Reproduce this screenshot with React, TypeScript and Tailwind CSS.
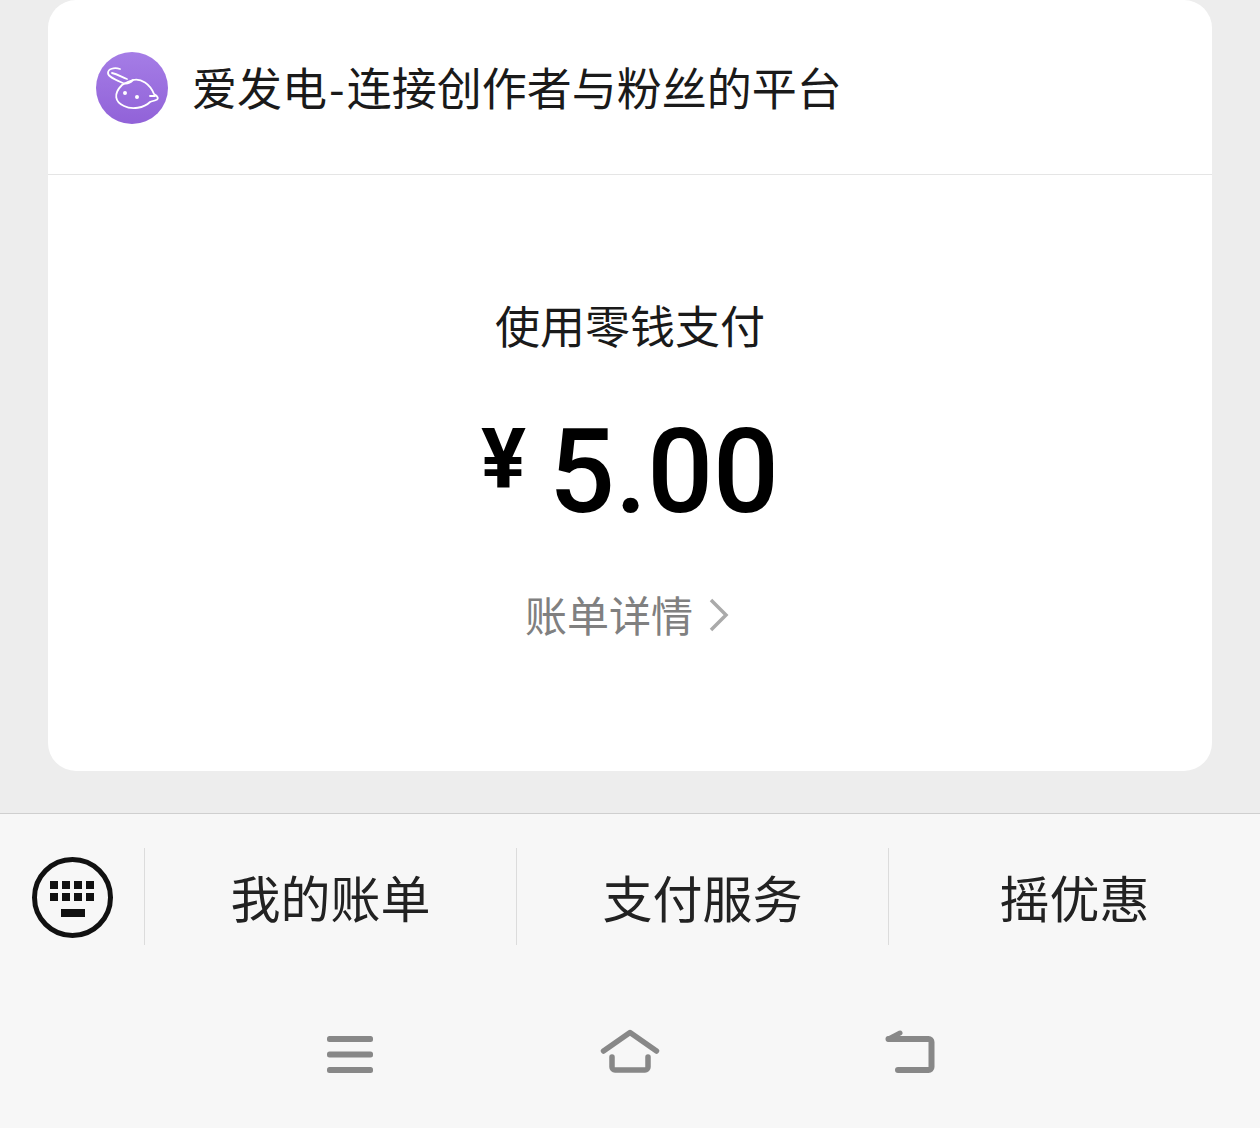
const cjk = "font-['Noto_Sans_CJK_SC','Noto_Sans',sans-serif]";

function Logo() {
  return (
    <div className="flex h-[72px] w-[72px] items-center justify-center rounded-full bg-gradient-to-b from-[#a57de6] to-[#9162d8]">
      <svg width="72" height="72" viewBox="0 0 72 72" fill="none" stroke="#fff" strokeWidth="1.8" strokeLinecap="round" strokeLinejoin="round">
        <path d="M24 17C18 15 12 17 12 21c0 4 8 7 15 10 3 1 6 1 10-3" />
        <path d="M16 21c6 1 11 5 15 6" />
        <path d="M37 28c8-2 17 4 21 14 4 2 5 5 2 6-2 1-4 1-6 2-6 6-18 8-26 4-9-4-11-12-2-21 3-2 7-4 11-5z" />
        <path d="M54 44c2 0 4 0 5 0" />
        <circle cx="29" cy="41" r="1.100" fill="#fff" />
        <circle cx="41" cy="45" r="1.100" fill="#fff" />
      </svg>
    </div>
  );
}

function KeyboardIcon() {
  return (
    <svg width="81" height="81" viewBox="0 0 81 81" fill="#111">
      <circle cx="40.5" cy="40.500" r="38" fill="none" stroke="#111" strokeWidth="5" />
      {[18, 30, 42, 54].map((x) => (
        <g key={x}>
          <rect x={x} y="24" width="8" height="8" />
          <rect x={x} y="36" width="8" height="8" />
        </g>
      ))}
      <rect x="29" y="52" width="24" height="8" />
    </svg>
  );
}

function MenuIcon() {
  return (
    <svg width="46" height="37" viewBox="0 0 46 37" fill="#888">
      <rect x="0" y="0" width="46" height="6" rx="2.5" />
      <rect x="0" y="15.500" width="46" height="6" rx="2.5" />
      <rect x="0" y="31" width="46" height="6" rx="2.5" />
    </svg>
  );
}

function HomeIcon() {
  return (
    <svg width="60" height="44" viewBox="0 0 60 44" fill="none" stroke="#888" strokeWidth="5.500" strokeLinecap="round" strokeLinejoin="round">
      <path d="M3.500 22 30 3.500 56.500 22" />
      <path d="M12 28v10a3 3 0 0 0 3 3h30a3 3 0 0 0 3-3V28" />
    </svg>
  );
}

function BackIcon() {
  return (
    <svg width="50" height="44" viewBox="0 0 50 44" fill="none" stroke="#888" strokeWidth="6" strokeLinecap="round" strokeLinejoin="round">
      <path d="M3.500 10h40a3 3 0 0 1 3 3v25a3 3 0 0 1-3 3H13" />
      <path d="M3.500 10 15 4" strokeWidth="5" />
    </svg>
  );
}

function DetailChevron() {
  return (
    <svg width="20" height="34" viewBox="0 0 20 34" fill="none" stroke="#aaa" strokeWidth="3.500" className="mt-[2px]">
      <path d="M2 2l15 15L2 32" />
    </svg>
  );
}

function MenuItem({ label }: { label: string }) {
  return (
    <div className="flex h-[97px] w-[372px] items-center justify-center border-l border-[#dcdcdc] text-[50px] text-[#222]">
      {label}
    </div>
  );
}

export default function App() {
  return (
    <div className={`flex h-[1128px] w-[1260px] flex-col overflow-hidden bg-[#ededed] ${cjk}`}>
      <div className="px-12">
        <div className="h-[771px] rounded-[28px] bg-white">
          <div className="flex h-[175px] items-center gap-6 border-b border-[#e5e5e5] px-12 pt-[2px]">
            <Logo />
            <span className="mb-1 text-[45px] leading-none text-[#1a1a1a]">
              爱发电<span className="px-[2px]">-</span>连接创作者与粉丝的平台
            </span>
          </div>
          <div className="flex flex-col items-center">
            <p className="mt-[122px] text-[45px] leading-[56px] text-[#1a1a1a]">使用零钱支付</p>
            <div className="mt-[64px] flex h-[110px] items-center font-['Roboto',sans-serif] font-medium text-black">
              <span className="mb-6 mr-[23px] text-[84px] font-bold leading-none">¥</span>
              <span className="text-[116px] leading-none">5.00</span>
            </div>
            <div className="mt-[59px] flex items-center gap-4">
              <span className="text-[42px] leading-[56px] text-[#808080]">账单详情</span>
              <div className="mr-[6px]">
                <DetailChevron />
              </div>
            </div>
          </div>
        </div>
      </div>
      <div className="mt-[42px] flex-1 border-t border-[#cfcfcf] bg-[#f7f7f7]">
        <div className="mt-[34px] flex h-[97px] items-center">
          <div className="flex w-[144px] items-center justify-center pt-[2px]">
            <KeyboardIcon />
          </div>
          <MenuItem label="我的账单" />
          <MenuItem label="支付服务" />
          <MenuItem label="摇优惠" />
        </div>
        <div className="mt-[84px] flex h-[44px] items-end justify-center">
          <div className="flex w-[280px] justify-center"><MenuIcon /></div>
          <div className="flex w-[280px] justify-center"><HomeIcon /></div>
          <div className="flex w-[280px] justify-center"><BackIcon /></div>
        </div>
      </div>
    </div>
  );
}
